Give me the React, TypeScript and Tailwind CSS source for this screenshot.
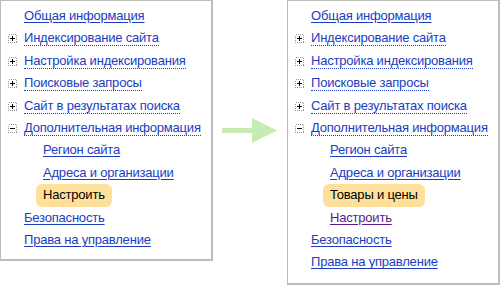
import React from "react";

type Item = {
  label: string;
  level?: number;
  toggle?: "plus" | "minus";
  dotted?: boolean;
  current?: boolean;
  visited?: boolean;
};

const leftItems: Item[] = [
  { label: "Общая информация" },
  { label: "Индексирование сайта", toggle: "plus", dotted: true },
  { label: "Настройка индексирования", toggle: "plus", dotted: true },
  { label: "Поисковые запросы", toggle: "plus", dotted: true },
  { label: "Сайт в результатах поиска", toggle: "plus", dotted: true },
  { label: "Дополнительная информация", toggle: "minus", dotted: true },
  { label: "Регион сайта", level: 1 },
  { label: "Адреса и организации", level: 1 },
  { label: "Настроить", level: 1, current: true },
  { label: "Безопасность" },
  { label: "Права на управление" },
];

const rightItems: Item[] = [
  { label: "Общая информация" },
  { label: "Индексирование сайта", toggle: "plus", dotted: true },
  { label: "Настройка индексирования", toggle: "plus", dotted: true },
  { label: "Поисковые запросы", toggle: "plus", dotted: true },
  { label: "Сайт в результатах поиска", toggle: "plus", dotted: true },
  { label: "Дополнительная информация", toggle: "minus", dotted: true },
  { label: "Регион сайта", level: 1 },
  { label: "Адреса и организации", level: 1 },
  { label: "Товары и цены", level: 1, current: true },
  { label: "Настроить", level: 1, visited: true },
  { label: "Безопасность" },
  { label: "Права на управление" },
];

function Toggle({ kind }: { kind: "plus" | "minus" }) {
  return (
    <svg width="9" height="9" viewBox="0 0 9 9" className="block" shapeRendering="crispEdges">
      <rect x="0.5" y="0.5" width="8" height="8" fill="none" stroke="#9a9a9a" strokeDasharray="1 1" />
      <line x1="2" y1="4.5" x2="7" y2="4.5" stroke="#000" />
      {kind === "plus" && <line x1="4.5" y1="2" x2="4.5" y2="7" stroke="#000" />}
    </svg>
  );
}

function Row({ item }: { item: Item }) {
  const indent = item.level ? "pl-[42px]" : "pl-[23px]";
  return (
    <li className={`relative h-[22.4px] whitespace-nowrap leading-[22.4px] ${indent}`}>
      {item.toggle && (
        <span className="absolute left-[7px] top-[7px]">
          <Toggle kind={item.toggle} />
        </span>
      )}
      {item.current ? (
        <span className="-ml-[7px] inline-block rounded-[6px] bg-[#ffe09a] px-[7px] text-black">
          {item.label}
        </span>
      ) : item.dotted ? (
        <a href="#" className="border-b border-dotted border-[#1a3dc1] text-[#1a3dc1] no-underline">
          {item.label}
        </a>
      ) : (
        <a
          href="#"
          className={`underline underline-offset-[2px] ${item.visited ? "text-[#5a1a8a]" : "text-[#1a3dc1]"}`}
        >
          {item.label}
        </a>
      )}
    </li>
  );
}

function Panel({ items, height }: { items: Item[]; height: string }) {
  return (
    <div className={`w-[213px] ${height} shrink-0 border-2 border-[#bdbdbd] border-l-1 border-t-1 bg-white pt-[4px]`}>
      <ul className="m-0 list-none p-0">
        {items.map((it, i) => (
          <Row key={i} item={it} />
        ))}
      </ul>
    </div>
  );
}

export default function App() {
  return (
    <div
      className="flex h-[285px] w-[500px] items-start bg-white text-[13px] tracking-[-0.2px]"
      style={{ fontFamily: '"Liberation Sans", Arial, sans-serif' }}
    >
      <Panel items={leftItems} height="h-[261px]" />
      <div className="flex h-[261px] w-[74px] shrink-0 items-start pl-[9px] pt-[118px]">
        <svg width="55" height="25" viewBox="0 0 55 25" shapeRendering="crispEdges">
          <rect x="0" y="10" width="31" height="5" fill="#c8ebb4" />
          <polygon points="30,0 55,12.5 30,25" fill="#c8ebb4" />
        </svg>
      </div>
      <Panel items={rightItems} height="h-[285px]" />
    </div>
  );
}
